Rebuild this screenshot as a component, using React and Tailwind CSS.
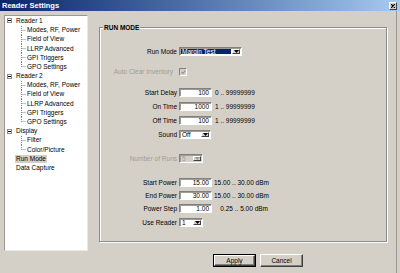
const tree = [
  { label: 'Reader 1', open: true, children: ['Modes, RF, Power', 'Field of View', 'LLRP Advanced', 'GPI Triggers', 'GPO Settings'] },
  { label: 'Reader 2', open: true, children: ['Modes, RF, Power', 'Field of View', 'LLRP Advanced', 'GPI Triggers', 'GPO Settings'] },
  { label: 'Display', open: true, children: ['Filter', 'Color/Picture'] },
  { label: 'Run Mode', selected: true },
  { label: 'Data Capture' },
];

function Connector({ last }) {
  return (
    <svg width="5" height="9.2" className="shrink-0">
      <line x1="0.5" y1="0" x2="0.5" y2={last ? 4.6 : 9.2} stroke="#808080" strokeDasharray="1 1" />
      <line x1="0.5" y1="4.6" x2="5" y2="4.6" stroke="#808080" strokeDasharray="1 1" />
    </svg>
  );
}

function TreeView() {
  return (
    <div className="w-[84px] h-[236px] shrink-0 bg-white border border-t-[#9c9890] border-l-[#9c9890] border-r-[#ebe9e3] border-b-[#ebe9e3] pt-[0.4px]">
      {tree.map((node) => (
        <div key={node.label}>
          <div className="h-[9.2px] flex items-center pl-[2px]">
            {node.children ? (
              <span className="w-[5px] h-[5px] border border-[#8c8c8c] bg-white flex items-center justify-center shrink-0">
                <span className="w-[3px] h-px bg-black" />
              </span>
            ) : (
              <span className="w-[5px] shrink-0" />
            )}
            <span className={`ml-[3px] px-[1px] leading-[8px] ${node.selected ? 'bg-[#d4d0c8]' : ''}`}>{node.label}</span>
          </div>
          {node.open &&
            node.children.map((c, i) => (
              <div key={c} className="h-[9.2px] flex items-center pl-[16px]">
                <Connector last={i === node.children.length - 1} />
                <span className="ml-[1px] leading-[8px] whitespace-nowrap">{c}</span>
              </div>
            ))}
        </div>
      ))}
    </div>
  );
}

function Arrow({ disabled = false }) {
  return (
    <span className="w-[8px] h-full shrink-0 bg-[#d4d0c8] border border-t-white border-l-white border-r-[#404040] border-b-[#404040] flex items-center justify-center">
      <svg width="5" height="3">
        <polygon points="0,0 5,0 2.5,3" fill={disabled ? '#a09c94' : '#000'} />
      </svg>
    </span>
  );
}

function TextBox({ value }) {
  return (
    <div className="w-[33px] h-[9px] bg-white border border-t-[#808080] border-l-[#808080] border-r-white border-b-white shadow-[inset_1px_1px_0_#a09c94] flex items-center justify-end pr-[2px] leading-[7px]">
      {value}
    </div>
  );
}

function Select({ width, value, disabled = false, highlight = false }) {
  return (
    <div
      className={`${width} h-[9px] border border-t-[#808080] border-l-[#808080] border-r-white border-b-white shadow-[inset_1px_1px_0_#a09c94] flex p-[1px] ${disabled ? 'bg-[#d4d0c8]' : 'bg-white'}`}
    >
      <span
        className={`flex-1 mr-[1px] pl-[1px] leading-[6px] flex items-center ${highlight ? 'bg-[#0a246a] text-white' : ''} ${disabled ? 'text-[#a09c94]' : ''}`}
      >
        {value}
      </span>
      <Arrow disabled={disabled} />
    </div>
  );
}

function Row({ label, children, className = '', disabled = false, labelClass = '' }) {
  return (
    <div className={`h-[9px] flex items-center ${className}`}>
      <span className={`w-[77px] shrink-0 text-right whitespace-nowrap ${labelClass} ${disabled ? 'text-[#a09c94]' : ''}`}>{label}</span>
      <div className="ml-[2px] flex items-center h-full">{children}</div>
    </div>
  );
}

function Hint({ children, wide = false }) {
  return <span className={`whitespace-nowrap ${wide ? 'ml-[2px] w-[54px] text-right' : 'ml-[3px]'}`}>{children}</span>;
}

function Button({ children, isDefault = false }) {
  return (
    <div className={`w-[43px] h-[13px] ${isDefault ? 'border border-black' : ''}`}>
      <div className="w-full h-full bg-[#d4d0c8] border border-t-white border-l-white border-r-[#404040] border-b-[#404040] shadow-[inset_-1px_-1px_0_#808080] flex items-center justify-center">
        {children}
      </div>
    </div>
  );
}

export default function App() {
  return (
    <div className="w-[400px] h-[273px] overflow-hidden bg-[#d4d0c8] text-black text-[6.5px] font-['Liberation_Sans',Arial,sans-serif]">
      <div className="h-[11px] flex items-center justify-between bg-gradient-to-r from-[#0a246a] to-[#a6caf0] pl-[2px] pr-[3px]">
        <span className="text-white font-bold text-[7.5px] leading-[9px]">Reader Settings</span>
        <div className="w-[8px] h-[8px] bg-[#d4d0c8] border border-t-white border-l-white border-r-[#404040] border-b-[#404040] flex items-center justify-center">
          <svg width="4" height="4">
            <path d="M0 0 L4 4 M4 0 L0 4" stroke="#000" strokeWidth="1.2" />
          </svg>
        </div>
      </div>

      <div className="w-[397px] h-[262px] flex pl-[4px] pt-[4px] border-r border-[#9c9890]">
        <TreeView />

        <div className="ml-[11px] flex flex-col">
          <div className="mt-[12px] w-[288px] h-[215px] border border-[#8c8c8c] shadow-[inset_1px_1px_0_#fff,1px_1px_0_#fff] flex flex-col">
            <span className="-mt-[5px] ml-[3px] px-[1px] self-start bg-[#d4d0c8] font-bold leading-[9px]">RUN MODE</span>

            <div className="mt-[15px] flex flex-col">
              <Row label="Run Mode">
                <Select width="w-[63px]" value="Margin Test" highlight />
              </Row>
              <Row label="Auto Clear Inventory" disabled labelClass="pr-[4px]" className="mt-[11px] h-[8px]">
                <div className="w-[8px] h-[8px] bg-[#d4d0c8] border border-t-[#808080] border-l-[#808080] border-r-white border-b-white flex items-center justify-center">
                  <svg width="5" height="4">
                    <path d="M0.5 2 L2 3.5 L4.5 0.5" stroke="#a09c94" strokeWidth="1.2" fill="none" />
                  </svg>
                </div>
              </Row>
              <Row label="Start Delay" className="mt-[12px]">
                <TextBox value="100" />
                <Hint>0 .. 99999999</Hint>
              </Row>
              <Row label="On Time" className="mt-[5px]">
                <TextBox value="1000" />
                <Hint>1 .. 99999999</Hint>
              </Row>
              <Row label="Off Time" className="mt-[5px]">
                <TextBox value="100" />
                <Hint>1 .. 99999999</Hint>
              </Row>
              <Row label="Sound" className="mt-[5px]">
                <Select width="w-[32px]" value="Off" />
              </Row>
              <Row label="Number of Runs" disabled className="mt-[15px]">
                <Select width="w-[24px]" value="5" disabled />
              </Row>
              <Row label="Start Power" className="mt-[15px]">
                <TextBox value="15.00" />
                <Hint wide>15.00 .. 30.00 dBm</Hint>
              </Row>
              <Row label="End Power" className="mt-[4px]">
                <TextBox value="30.00" />
                <Hint wide>15.00 .. 30.00 dBm</Hint>
              </Row>
              <Row label="Power Step" className="mt-[4px]">
                <TextBox value="1.00" />
                <Hint wide>0.25 .. 5.00 dBm</Hint>
              </Row>
              <Row label="Use Reader" className="mt-[5px]">
                <Select width="w-[24px]" value="1" />
              </Row>
            </div>
          </div>

          <div className="mt-[12px] pl-[114px] flex gap-[4px]">
            <Button isDefault>Apply</Button>
            <Button>Cancel</Button>
          </div>
        </div>
      </div>
    </div>
  );
}
